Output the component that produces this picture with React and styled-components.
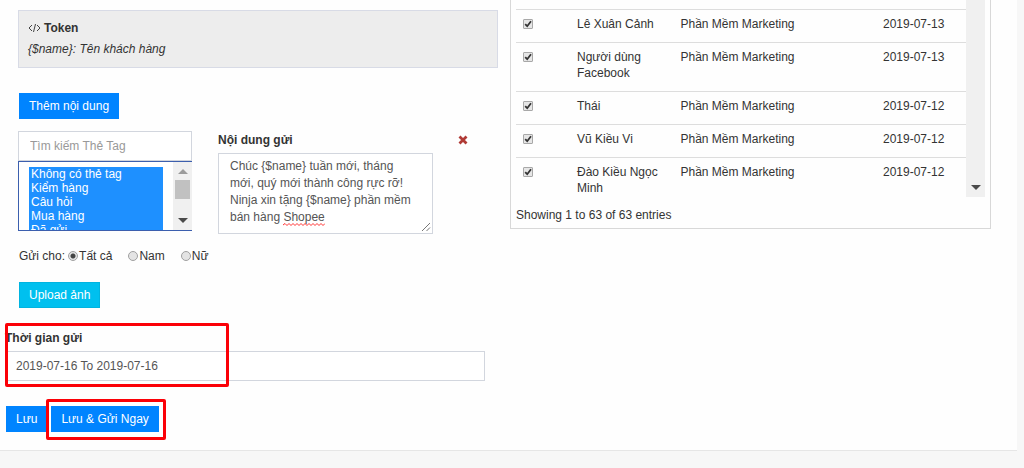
import React from "react";
import styled, { createGlobalStyle, css } from "styled-components";

const GlobalStyle = createGlobalStyle`
  * { box-sizing: border-box; }
  body {
    margin: 0;
    background: #f7f7f7;
    color: #333;
    font: 12px/16px "Liberation Sans", Arial, sans-serif;
  }
  button, input, select, textarea { font: inherit; color: inherit; margin: 0; border-radius: 0; }
`;

const Card = styled.main`
  display: grid;
  grid-template-columns: minmax(0, 1fr) minmax(0, 1fr);
  align-items: start;
  column-gap: 13px;
  margin: 0 7px 17px 0;
  padding: 0 26px 18px 18px;
  background: #fefefe;
  border-bottom: 1px solid #e6e6e6;
`;

const Form = styled.form`
  padding-top: 10px;
`;

const TokenBox = styled.section`
  padding: 7px 9px;
  border: 1px solid #d8dbe6;
  background: #ededed;
`;

const TokenTitle = styled.div`
  display: flex;
  align-items: center;
  gap: 3px;
  height: 20px;
  font-weight: 700;
`;

const TokenText = styled.div`
  height: 22px;
  line-height: 22px;
  font-style: italic;
`;

const Button = styled.button`
  display: block;
  height: 26px;
  padding: 0 9px;
  border: 1px solid ${(p) => (p.$info ? "#00b4e0" : "#0084ff")};
  background: ${(p) => (p.$info ? "#00c0ef" : "#0084ff")};
  color: #fff;
  font-weight: 500;
  white-space: nowrap;
`;

const AddRow = styled.div`
  padding: 25px 0 12px 1px;
`;

const MessageRow = styled.div`
  display: flex;
  gap: 26px;
`;

const TagColumn = styled.div`
  flex: 0 0 174px;
`;

const fieldBorder = css`
  border: 1px solid #d2d6de;
  background: #fff;
  outline: none;
`;

const TagSearch = styled.input`
  ${fieldBorder}
  display: block;
  width: 100%;
  height: 30px;
  padding: 0 11px;
  &::placeholder { color: #999; opacity: 1; }
`;

const TagListFrame = styled.div`
  display: flex;
  height: 70px;
  border: 1px solid #3c5fae;
  border-right: 0;
  background: #fff;
`;

const TagList = styled.select`
  flex: 1;
  min-width: 0;
  height: 100%;
  padding: 5px 10px 0;
  border: 0;
  outline: none;
  background: transparent;
  overflow: hidden;
  option {
    height: 14px;
    min-height: 14px;
    padding: 0 2px;
    line-height: 14px;
    color: #fff;
    background: #1e90ff linear-gradient(#1e90ff, #1e90ff);
    -webkit-text-fill-color: #fff;
  }
`;

const ScrollTrack = styled.div`
  display: flex;
  flex-direction: column;
  align-items: center;
  flex: 0 0 19px;
  padding: 7px 0;
  background: #f0f0f0;
`;

const Arrow = styled.span`
  width: 0;
  height: 0;
  border: 5px solid transparent;
  ${(p) => (p.$up ? "border-top: 0; border-bottom-color: #9b9b9b;" : "border-bottom: 0; border-top-color: #4a4a4a; margin-top: auto;")}
`;

const Thumb = styled.span`
  width: 15px;
  height: 19px;
  margin-top: 6px;
  background: #c1c1c1;
`;

const MessageColumn = styled.div`
  flex: 0 1 250px;
  min-width: 0;
`;

const MessageHead = styled.div`
  display: flex;
  align-items: center;
  justify-content: space-between;
  height: 22px;
  padding-bottom: 4px;
`;

const Label = styled.label`
  font-weight: 700;
`;

const RemoveButton = styled.button`
  display: flex;
  padding: 0;
  border: 0;
  background: none;
`;

const MessageBox = styled.div`
  position: relative;
  width: 215px;
`;

const Message = styled.textarea`
  ${fieldBorder}
  display: block;
  width: 100%;
  height: 81px;
  padding: 4px 18px 4px 11px;
  line-height: 17px;
  color: #555;
  resize: none;
  overflow: hidden;
`;

const Squiggle = styled.svg`
  position: absolute;
  left: 65px;
  top: 70px;
`;

const ResizeGrip = styled.svg`
  position: absolute;
  right: 2px;
  bottom: 2px;
`;

const Audience = styled.fieldset`
  display: flex;
  align-items: center;
  height: 20px;
  margin: 12px 0 16px;
  padding: 0 0 0 1px;
  border: 0;
`;

const RadioLabel = styled.label`
  display: flex;
  align-items: center;
  gap: 1px;
  margin-left: ${(p) => (p.$first ? 3 : 16)}px;
`;

const Radio = styled.input`
  appearance: none;
  width: 10px;
  height: 10px;
  border: 1px solid #a0a0a0;
  && { border-radius: 50%; }
  background: #e4e4e4;
  &:checked { background: radial-gradient(circle, #444 0 2px, #e4e4e4 3px); }
`;

const UploadRow = styled.div`
  padding-left: 1px;
`;

const Schedule = styled.div`
  position: relative;
  margin: 22px 13px 0 -13px;
`;

const DateInput = styled.input`
  ${fieldBorder}
  display: block;
  width: 100%;
  height: 30px;
  margin-top: 5px;
  padding: 0 10px;
  color: #555;
`;

const Highlight = styled.div`
  position: absolute;
  inset: ${(p) => p.$inset};
  width: ${(p) => p.$width || "auto"};
  border: 3px solid #fb0007;
  border-radius: 2px;
  pointer-events: none;
`;

const Actions = styled.div`
  display: flex;
  gap: 4px;
  margin: 25px 0 0 -12px;
`;

const Marked = styled.div`
  position: relative;
`;

const Panel = styled.section`
  margin-left: -1px;
  padding: 0 5px;
  border: 1px solid #d8d8d8;
  border-top: 0;
`;

const ListFrame = styled.div`
  display: flex;
  height: 197px;
  overflow: hidden;
`;

const Table = styled.table`
  flex: 1;
  align-self: flex-start;
  table-layout: fixed;
  border-collapse: separate;
  border-spacing: 0;
  margin-top: 9px;
`;

const Cell = styled.td`
  padding: 6px 7px 10px;
  border-top: 1px solid #ddd;
  vertical-align: top;
`;

const Col = styled.col`
  width: ${(p) => p.$width};
`;

const CheckBox = styled.span`
  display: block;
  position: relative;
  width: 10px;
  height: 10px;
  margin-top: 3px;
  svg {
    position: absolute;
    inset: 0;
    pointer-events: none;
    visibility: hidden;
  }
  input:checked + svg { visibility: visible; }
`;

const CheckInput = styled.input`
  appearance: none;
  display: block;
  width: 10px;
  height: 10px;
  border: 1px solid #a8a8a8;
  background: #e6e6e6;
  && { border-radius: 1px; }
`;

function Check({ label }) {
  return (
    <CheckBox>
      <CheckInput type="checkbox" defaultChecked aria-label={label} />
      <svg width="10" height="10" viewBox="0 0 10 10" fill="none" stroke="#333" strokeWidth="1.8" aria-hidden="true">
        <path d="M2.200 5.200L4.200 7.200L8 2.300" />
      </svg>
    </CheckBox>
  );
}

const Summary = styled.p`
  margin: 0;
  padding: 10px 0 5px;
`;

const tags = ["Không có thẻ tag", "Kiểm hàng", "Câu hỏi", "Mua hàng", "Đã gửi"];

const customers = [
  ["Lê Xuân Cảnh", "2019-07-13"],
  ["Người dùng Facebook", "2019-07-13"],
  ["Thái", "2019-07-12"],
  ["Vũ Kiều Vi", "2019-07-12"],
  ["Đào Kiều Ngọc Minh", "2019-07-12"],
];

export default function App() {
  return (
    <>
      <GlobalStyle />
      <Card>
        <Form onSubmit={(e) => e.preventDefault()}>
          <TokenBox>
            <TokenTitle>
              <svg width="13" height="10" viewBox="0 0 13 10" fill="none" stroke="#444" strokeWidth="1" aria-hidden="true">
                <path d="M4 2L1 5l3 3M9 2l3 3-3 3M7.500 1l-2 8" />
              </svg>
              Token
            </TokenTitle>
            <TokenText>{"{$name}: Tên khách hàng"}</TokenText>
          </TokenBox>

          <AddRow>
            <Button type="button">Thêm nội dung</Button>
          </AddRow>

          <MessageRow>
            <TagColumn>
              <TagSearch type="text" placeholder="Tìm kiếm Thẻ Tag" aria-label="Tìm kiếm Thẻ Tag" />
              <TagListFrame>
                <TagList multiple size={5} defaultValue={tags} aria-label="Thẻ Tag">
                  {tags.map((t) => (
                    <option key={t} value={t}>{t}</option>
                  ))}
                </TagList>
                <ScrollTrack>
                  <Arrow $up />
                  <Thumb />
                  <Arrow />
                </ScrollTrack>
              </TagListFrame>
            </TagColumn>

            <MessageColumn>
              <MessageHead>
                <Label htmlFor="message">Nội dung gửi</Label>
                <RemoveButton type="button" aria-label="Xóa">
                  <svg width="10" height="10" viewBox="0 0 10 10" stroke="#b03a35" strokeWidth="2.8" aria-hidden="true">
                    <path d="M1.5 1.5l7 7M8.5 1.5l-7 7" />
                  </svg>
                </RemoveButton>
              </MessageHead>
              <MessageBox>
                <Message
                  id="message"
                  spellCheck={false}
                  defaultValue={"Chúc {$name} tuần mới, tháng mới, quý mới thành công rực rỡ! Ninja xin tặng {$name} phần mềm bán hàng Shopee"}
                />
                <Squiggle width="42" height="3" viewBox="0 0 42 3" fill="none" stroke="#f33" aria-hidden="true">
                  <path d="M0 2l2-1.5 2 2 2-2 2 2 2-2 2 2 2-2 2 2 2-2 2 2 2-2 2 2 2-2 2 2 2-2 2 2 2-2 2 2 2-2 2 2 2-2" />
                </Squiggle>
                <ResizeGrip width="10" height="10" viewBox="0 0 10 10" stroke="#777" aria-hidden="true">
                  <path d="M1 9l8-8M5.500 9L9 5.500" />
                </ResizeGrip>
              </MessageBox>
            </MessageColumn>
          </MessageRow>

          <Audience>
            <span>Gửi cho:</span>
            <RadioLabel $first>
              <Radio type="radio" name="audience" defaultChecked />
              Tất cả
            </RadioLabel>
            <RadioLabel>
              <Radio type="radio" name="audience" />
              Nam
            </RadioLabel>
            <RadioLabel>
              <Radio type="radio" name="audience" />
              Nữ
            </RadioLabel>
          </Audience>

          <UploadRow>
            <Button type="button" $info>Upload ảnh</Button>
          </UploadRow>

          <Schedule>
            <Label htmlFor="send-date">Thời gian gửi</Label>
            <DateInput id="send-date" type="text" defaultValue="2019-07-16 To 2019-07-16" />
            <Highlight $inset="-7px auto -6px 0" $width="224px" />
          </Schedule>

          <Actions>
            <Button type="submit">Lưu</Button>
            <Marked>
              <Button type="submit">Lưu &amp; Gửi Ngay</Button>
              <Highlight $inset="-7px -7px -8px -5px" />
            </Marked>
          </Actions>
        </Form>

        <Panel>
          <ListFrame>
            <Table>
              <colgroup>
                <Col $width="12%" />
                <Col $width="23%" />
                <Col $width="45%" />
                <Col $width="20%" />
              </colgroup>
              <tbody>
                {customers.map(([name, date]) => (
                  <tr key={name}>
                    <Cell><Check label={name} /></Cell>
                    <Cell>{name}</Cell>
                    <Cell>Phần Mềm Marketing</Cell>
                    <Cell>{date}</Cell>
                  </tr>
                ))}
              </tbody>
            </Table>
            <ScrollTrack>
              <Arrow />
            </ScrollTrack>
          </ListFrame>
          <Summary>Showing 1 to 63 of 63 entries</Summary>
        </Panel>
      </Card>
    </>
  );
}
